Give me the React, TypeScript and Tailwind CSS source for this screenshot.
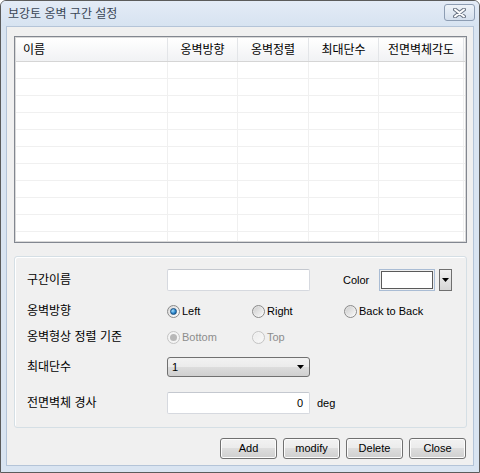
import clsx from "clsx";

const font = "font-['Liberation_Sans','Noto_Sans_CJK_KR',sans-serif]";

const columns = [
  { label: "이름", width: "w-[152px]", align: "justify-start pl-[7px]" },
  { label: "옹벽방향", width: "w-[70px]", align: "justify-center" },
  { label: "옹벽정렬", width: "w-[71px]", align: "justify-center" },
  { label: "최대단수", width: "w-[70px]", align: "justify-center" },
  { label: "전면벽체각도", width: "w-[85px]", align: "justify-center" },
];

const rows = Array.from({ length: 11 }, (_, i) => i);

function Radio({ checked, disabled }: { checked?: boolean; disabled?: boolean }) {
  return (
    <span
      className={clsx(
        "flex h-[13px] w-[13px] shrink-0 items-center justify-center rounded-full border",
        disabled ? "border-[#c4c4c4] bg-[#f4f4f4]" : "border-[#8a8a8a] bg-gradient-to-br from-[#d9d9d9] to-[#ffffff]",
      )}
    >
      {checked && !disabled && (
        <span className="h-[7px] w-[7px] rounded-full border border-[#1a4f80] bg-[radial-gradient(circle_at_35%_35%,#a6e0ff,#2a86cc_55%,#0b4f8c)]" />
      )}
      {checked && disabled && <span className="h-[7px] w-[7px] rounded-full bg-[#b8b8b8]" />}
      {!checked && (
        <span
          className={clsx(
            "h-[9px] w-[9px] rounded-full bg-gradient-to-br",
            disabled ? "from-[#ececec] to-[#f8f8f8]" : "from-[#cfcfcf] to-[#f7f7f7]",
          )}
        />
      )}
    </span>
  );
}

function Option({ label, checked, disabled, width }: { label: string; checked?: boolean; disabled?: boolean; width?: string }) {
  return (
    <div className={clsx("flex items-center gap-[2px]", width)}>
      <Radio checked={checked} disabled={disabled} />
      <span className={clsx("text-[11px]", disabled ? "text-[#8d8d8d]" : "text-black")}>{label}</span>
    </div>
  );
}

function Arrow() {
  return (
    <svg width="7" height="4" viewBox="0 0 7 4">
      <path d="M0 0h7L3.5 4z" fill="#000" />
    </svg>
  );
}

function Button({ label }: { label: string }) {
  return (
    <div className="flex h-[21px] w-[57px] items-center justify-center rounded-[3px] border border-[#707070] bg-[linear-gradient(#f2f2f2,#ebebeb_50%,#dddddd_50%,#cfcfcf)] text-[11px] text-black shadow-[inset_0_0_0_1px_#fcfcfc]">
      {label}
    </div>
  );
}

export default function App() {
  return (
    <div className={clsx("flex h-[473px] w-[480px] flex-col rounded-t-[6px] border border-[#5b5b5b] bg-[#d9e4f1]", font)}>
      {/* title bar */}
      <div className="flex h-[25px] items-center justify-between rounded-t-[5px] bg-gradient-to-b from-[#e3ebf6] to-[#d7e3f1] pl-[7px] pr-[4px]">
        <span className="text-[12px] text-[#3a4656]">보강토 옹벽 구간 설정</span>
        <div className="mt-[3px] flex h-[17px] w-[31px] items-center justify-center self-start rounded-[3px] border border-[#8d9db3] bg-gradient-to-b from-[#eef3f9] to-[#d5e0ed]">
          <svg width="13" height="10" viewBox="0 0 13 10">
            <path d="M2 1.5l9 7M11 1.5l-9 7" stroke="#6a7585" strokeWidth="4" strokeLinecap="round" />
            <path d="M2 1.5l9 7M11 1.5l-9 7" stroke="#ffffff" strokeWidth="2" strokeLinecap="round" />
          </svg>
        </div>
      </div>

      {/* client area */}
      <div className="mx-[5px] flex h-[440px] flex-col border border-[#b4c4d8] bg-[#f0f0f0] px-[6px]">
        {/* list view */}
        <div className="mt-[9px] ml-[1px] h-[207px] w-[453px] border border-[#828790] bg-white">
          <div className="h-full overflow-hidden border border-[#d9d9d9]">
            <div className="flex h-[24px] border-b border-[#d5d5d5] bg-gradient-to-b from-white to-[#f1f2f4]">
              {columns.map((c) => (
                <div key={c.label} className={clsx("flex items-center border-r border-[#e3e5e8] text-[12px] text-black", c.width, c.align)}>
                  {c.label}
                </div>
              ))}
            </div>
            {rows.map((r) => (
              <div key={r} className="flex h-[17px] border-b border-[#f0f0f0]">
                {columns.map((c) => (
                  <div key={c.label} className={clsx("border-r border-[#f0f0f0]", c.width)} />
                ))}
              </div>
            ))}
          </div>
        </div>

        {/* group box */}
        <div className="mt-[13px] ml-[1px] h-[172px] w-[453px] rounded-[3px] border border-[#d5dfe5] pl-[12px] pt-[12px] shadow-[inset_1px_1px_0_#ffffff]">
          <div className="flex h-[22px] items-center">
            <span className="w-[140px] text-[12px] text-black">구간이름</span>
            <div className="h-[22px] w-[143px] rounded-[2px] border border-[#d6d9df] border-t-[#c4c8cf] bg-white" />
            <span className="ml-[33px] w-[36px] text-[11px] text-black">Color</span>
            <div className="h-[22px] w-[56px] border border-[#a9bcd4] p-[1px]">
              <div className="h-full w-full border border-[#5a5a5a] bg-white" />
            </div>
            <div className="ml-[4px] flex h-[22px] w-[13px] items-center justify-center border border-[#6f6f6f] bg-gradient-to-b from-[#f0f0f0] to-[#d6d6d6]">
              <Arrow />
            </div>
          </div>

          <div className="mt-[12px] flex h-[16px] items-center">
            <span className="w-[140px] text-[12px] text-black">옹벽방향</span>
            <Option label="Left" checked width="w-[85px]" />
            <Option label="Right" width="w-[92px]" />
            <Option label="Back to Back" />
          </div>

          <div className="mt-[10px] flex h-[16px] items-center">
            <span className="w-[140px] text-[12px] text-black">옹벽형상 정렬 기준</span>
            <Option label="Bottom" checked disabled width="w-[85px]" />
            <Option label="Top" disabled />
          </div>

          <div className="mt-[12px] flex h-[20px] items-center">
            <span className="w-[140px] text-[12px] text-black">최대단수</span>
            <div className="flex h-[20px] w-[143px] items-center justify-between rounded-[3px] border border-[#707070] bg-[linear-gradient(#f2f2f2,#ebebeb_50%,#dddddd_50%,#cfcfcf)] pl-[4px] pr-[5px] text-[11px] text-black">
              <span>1</span>
              <Arrow />
            </div>
          </div>

          <div className="mt-[15px] flex h-[22px] items-center">
            <span className="w-[140px] text-[12px] text-black">전면벽체 경사</span>
            <div className="flex h-[22px] w-[143px] items-center justify-end rounded-[2px] border border-[#d6d9df] border-t-[#c4c8cf] bg-white pr-[6px] text-[11px] text-black">
              0
            </div>
            <span className="ml-[7px] text-[11px] text-black">deg</span>
          </div>
        </div>

        {/* buttons */}
        <div className="mt-[10px] flex justify-end gap-[6px] pr-[1px]">
          <Button label="Add" />
          <Button label="modify" />
          <Button label="Delete" />
          <Button label="Close" />
        </div>
      </div>
    </div>
  );
}
